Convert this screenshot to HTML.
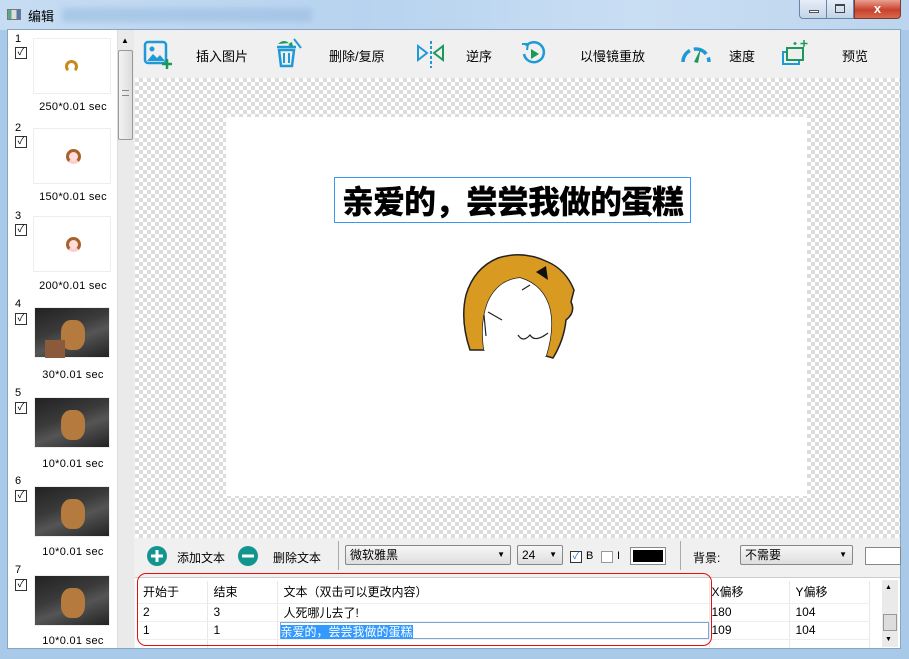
<!DOCTYPE html>
<html><head><meta charset="utf-8"><style>
*{box-sizing:border-box;margin:0;padding:0}
body{width:909px;height:659px;overflow:hidden;background:#a9c9e8;font-family:"Liberation Sans","Noto Sans CJK SC",sans-serif;font-size:12px;color:#000;position:relative}
.abs{position:absolute}
.title{left:0;top:0;width:909px;height:30px;background:linear-gradient(90deg,#c6dcf2,#b7d3ef 40%,#c9def3 70%,#bcd5ee)}
.checker{background-color:#fff;background-image:linear-gradient(45deg,#dcdcdc 25%,transparent 25%,transparent 75%,#dcdcdc 75%),linear-gradient(45deg,#dcdcdc 25%,transparent 25%,transparent 75%,#dcdcdc 75%);background-size:8px 8px;background-position:0 0,4px 4px}
.tb{font-size:13px}
.cb{width:12px;height:12px;border:1px solid #333;background:#fff;font-size:10px;line-height:10px;text-align:center}
.thumb{left:33px;width:78px;height:56px;background:#fff;border:1px solid #eee}
.dog{background:linear-gradient(160deg,#222 0,#3a3a3a 40%,#555 60%,#222);}
.lbl{left:30px;width:86px;text-align:center;font-size:11px;letter-spacing:.3px}
.dd{border:1px solid #888;background:linear-gradient(#f7f7f7,#dedede);border-radius:2px;height:20px;font-size:12px;line-height:18px;padding-left:4px}
.dd:after{content:"▼";position:absolute;right:5px;font-size:8px}
td{height:18px;padding-left:6px;border-right:1px solid #e8e8e8;border-bottom:1px solid #eee;font-size:12px}
</style></head><body>
<div class="abs title"></div>
<div class="abs" style="left:7px;top:9px;width:14px;height:11px;background:linear-gradient(90deg,#5a8 0,#5a8 30%,#ddd 30%,#ddd 70%,#57a 70%);border:1px solid #777"></div>
<div class="abs" style="left:28px;top:6px;font-size:13px">编辑</div>
<div class="abs" style="left:62px;top:8px;width:250px;height:14px;background:#9fc0e3;filter:blur(3px);opacity:.7"></div>
<div class="abs" style="left:799px;top:0;width:28px;height:19px;border:1px solid #6b84a3;border-top:none;border-radius:0 0 0 4px;background:linear-gradient(#e6eef8,#c3d4e8)"><div class="abs" style="left:9px;top:10px;width:10px;height:3px;border:1px solid #555;background:#fff"></div></div>
<div class="abs" style="left:827px;top:0;width:27px;height:19px;border:1px solid #6b84a3;border-top:none;border-left:none;background:linear-gradient(#e6eef8,#c3d4e8)"><div class="abs" style="left:8px;top:4px;width:10px;height:9px;border:1px solid #444;border-top-width:2px"></div></div>
<div class="abs" style="left:854px;top:0;width:47px;height:19px;border:1px solid #7a3a30;border-top:none;border-radius:0 0 4px 0;background:linear-gradient(#e9a192,#c8412b 55%,#d6694c);color:#fff;font-weight:bold;text-align:center;font-size:13px;line-height:17px">x</div>
<div class="abs" style="left:7px;top:29px;width:894px;height:620px;background:#f0f0f0;border:1px solid #8aa4c3"></div>
<div class="abs" style="left:8px;top:30px;width:109px;height:618px;background:#fff"></div>
<div class="abs" style="left:117px;top:30px;width:17px;height:618px;background:#eaeaea;border-left:1px solid #ddd"></div>
<div class="abs" style="left:121px;top:36px;font-size:8px">▲</div>
<div class="abs" style="left:118px;top:50px;width:15px;height:90px;background:linear-gradient(90deg,#f3f3f3,#dcdcdc);border:1px solid #999;border-radius:2px"></div>
<div class="abs" style="left:122px;top:90px;width:7px;height:6px;border-top:1px solid #888;border-bottom:1px solid #888"></div>

<div class="abs" style="left:15px;top:33px;font-size:11px">1</div><div class="abs cb" style="left:15px;top:47px">✓</div>
<div class="abs thumb" style="top:38px"><div class="abs" style="left:31px;top:21px;width:13px;height:13px;border:3px solid #c88a1c;border-bottom-color:#fff;border-radius:50%"></div></div>
<div class="abs lbl" style="top:101px">250*0.01 sec</div>
<div class="abs" style="left:15px;top:122px;font-size:11px">2</div><div class="abs cb" style="left:15px;top:136px">✓</div>
<div class="abs thumb" style="top:128px"><div class="abs" style="left:32px;top:20px;width:15px;height:15px;border:3px solid #a8612a;border-bottom-color:#fcc;border-radius:50%;background:#fdd"></div></div>
<div class="abs lbl" style="top:191px">150*0.01 sec</div>
<div class="abs" style="left:15px;top:210px;font-size:11px">3</div><div class="abs cb" style="left:15px;top:224px">✓</div>
<div class="abs thumb" style="top:216px"><div class="abs" style="left:32px;top:20px;width:15px;height:15px;border:3px solid #a8612a;border-bottom-color:#fcc;border-radius:50%;background:#fdd"></div></div>
<div class="abs lbl" style="top:280px">200*0.01 sec</div>
<div class="abs" style="left:15px;top:298px;font-size:11px">4</div><div class="abs cb" style="left:15px;top:313px">✓</div>
<div class="abs thumb dog" style="top:307px;left:34px;width:76px;height:51px"><div class="abs" style="left:26px;top:12px;width:24px;height:30px;background:#b57a3e;border-radius:40%"></div><div class="abs" style="left:10px;top:32px;width:20px;height:18px;background:#8a5a3a"></div></div>
<div class="abs lbl" style="top:369px">30*0.01 sec</div>
<div class="abs" style="left:15px;top:387px;font-size:11px">5</div><div class="abs cb" style="left:15px;top:402px">✓</div>
<div class="abs thumb dog" style="top:397px;left:34px;width:76px;height:51px"><div class="abs" style="left:26px;top:12px;width:24px;height:30px;background:#b57a3e;border-radius:40%"></div></div>
<div class="abs lbl" style="top:458px">10*0.01 sec</div>
<div class="abs" style="left:15px;top:475px;font-size:11px">6</div><div class="abs cb" style="left:15px;top:490px">✓</div>
<div class="abs thumb dog" style="top:486px;left:34px;width:76px;height:51px"><div class="abs" style="left:26px;top:12px;width:24px;height:30px;background:#b57a3e;border-radius:40%"></div></div>
<div class="abs lbl" style="top:546px">10*0.01 sec</div>
<div class="abs" style="left:15px;top:564px;font-size:11px">7</div><div class="abs cb" style="left:15px;top:579px">✓</div>
<div class="abs thumb dog" style="top:575px;left:34px;width:76px;height:51px"><div class="abs" style="left:26px;top:12px;width:24px;height:30px;background:#b57a3e;border-radius:40%"></div></div>
<div class="abs lbl" style="top:635px">10*0.01 sec</div>

<svg class="abs" style="left:143px;top:40px" width="30" height="30" viewBox="0 0 30 30"><rect x="2" y="2" width="21" height="21" rx="3" fill="none" stroke="#1f9ad6" stroke-width="2.5"/><circle cx="9" cy="9" r="2.5" fill="#1f9ad6"/><path d="M4 21l6-7 4 4 3-3 5 6z" fill="#1f9ad6"/><path d="M24 19v10M19 24h10" stroke="#1a9a5a" stroke-width="2.5"/></svg>
<div class="abs tb" style="left:196px;top:46px">插入图片</div>
<svg class="abs" style="left:274px;top:38px" width="30" height="30" viewBox="0 0 30 30"><path d="M3 9h19" stroke="#1f9ad6" stroke-width="2.5"/><path d="M5 12h15l-2 16H7z" fill="none" stroke="#1f9ad6" stroke-width="2.5"/><path d="M10 15v10M15 15v10" stroke="#1f9ad6" stroke-width="2"/><path d="M4 6q6-6 12 0l-2 1 5 2-1-5-2 1" fill="#1a9a5a"/><path d="M20 1l7 9" stroke="#1f9ad6" stroke-width="2"/></svg>
<div class="abs tb" style="left:329px;top:46px">删除/复原</div>
<svg class="abs" style="left:416px;top:40px" width="30" height="30" viewBox="0 0 30 30"><path d="M2 6l9 7-9 7z" fill="none" stroke="#1f9ad6" stroke-width="2"/><path d="M27 6l-9 7 9 7z" fill="none" stroke="#1a9a5a" stroke-width="2"/><path d="M15 1v27" stroke="#1f9ad6" stroke-width="2" stroke-dasharray="3 2"/></svg>
<div class="abs tb" style="left:466px;top:46px">逆序</div>
<svg class="abs" style="left:520px;top:40px" width="28" height="28" viewBox="0 0 28 28"><path d="M6 6A10 10 0 1 1 4 14" fill="none" stroke="#1f9ad6" stroke-width="2.5"/><path d="M2 4l6 0-1 6" fill="none" stroke="#1f9ad6" stroke-width="2"/><path d="M11 9l8 5-8 5z" fill="#1a9a5a"/></svg>
<div class="abs tb" style="left:580px;top:46px">以慢镜重放</div>
<svg class="abs" style="left:680px;top:42px" width="32" height="22" viewBox="0 0 32 22"><path d="M3 20A13 13 0 0 1 29 20" fill="none" stroke="#1f9ad6" stroke-width="3.5" stroke-dasharray="14 4"/><path d="M14 20l7-14-3 15z" fill="#1a9a5a"/></svg>
<div class="abs tb" style="left:729px;top:46px">速度</div>
<svg class="abs" style="left:780px;top:38px" width="28" height="30" viewBox="0 0 28 30"><rect x="3" y="14" width="16" height="12" fill="none" stroke="#1f9ad6" stroke-width="2"/><rect x="7" y="10" width="16" height="12" fill="#eee" stroke="#1a9a5a" stroke-width="2"/><path d="M24 2v7M20.5 5.5h7M15 4v3M13.5 5.5h3" stroke="#1a9a5a" stroke-width="1.5"/></svg>
<div class="abs tb" style="left:842px;top:46px">预览</div>

<div class="abs checker" style="left:135px;top:78px;width:765px;height:460px"></div>
<div class="abs" style="left:226px;top:117px;width:581px;height:379px;background:#fff"></div>
<div class="abs" style="left:334px;top:177px;width:357px;height:46px;border:1px solid #3a96f0;font-size:32px;font-weight:900;line-height:44px;text-align:center;font-family:'Noto Sans CJK SC',sans-serif;letter-spacing:-1px;white-space:nowrap;overflow:hidden">亲爱的，尝尝我做的蛋糕</div>
<svg class="abs" style="left:458px;top:250px" width="124" height="112" viewBox="0 0 124 112">
<path d="M12 100Q2 70 8 45Q16 18 40 8Q65 0 90 12Q108 20 116 40L113 52Q118 62 108 70Q106 90 95 108L88 106Q96 80 92 60Q86 35 62 28Q40 30 30 52Q22 72 26 100z" fill="#d99a22" stroke="#222" stroke-width="1.5"/>
<path d="M30 52Q22 72 26 100Q50 110 88 106Q96 80 92 60Q86 35 62 28Q40 30 30 52z" fill="#fff"/>
<path d="M78 22l10-6 2 14z" fill="#111"/>
<path d="M28 86L26 65M30 62l14 8M64 40l8-5M60 85q5 8 12 0q5 8 18-2" fill="none" stroke="#222" stroke-width="1.2"/></svg>

<svg class="abs" style="left:146px;top:545px" width="22" height="22"><circle cx="11" cy="11" r="10" fill="#12958f"/><path d="M11 5v12M5 11h12" stroke="#fff" stroke-width="3"/></svg>
<div class="abs" style="left:177px;top:549px">添加文本</div>
<svg class="abs" style="left:237px;top:545px" width="22" height="22"><circle cx="11" cy="11" r="10" fill="#12958f"/><path d="M5 11h12" stroke="#fff" stroke-width="3"/></svg>
<div class="abs" style="left:273px;top:549px">删除文本</div>
<div class="abs" style="left:338px;top:541px;width:1px;height:29px;background:#aaa"></div>
<div class="abs dd" style="left:345px;top:545px;width:166px">微软雅黑</div>
<div class="abs dd" style="left:517px;top:545px;width:46px">24</div>
<div class="abs cb" style="left:570px;top:551px;width:12px;height:12px;color:#2b6fd0">✓</div><div class="abs" style="left:586px;top:550px;font-size:11px">B</div>
<div class="abs cb" style="left:601px;top:551px;border-color:#999"></div><div class="abs" style="left:617px;top:550px;font-size:11px">I</div>
<div class="abs" style="left:630px;top:547px;width:36px;height:18px;border:1px solid #888;background:#fff;padding:2px"><div style="background:#000;width:100%;height:100%"></div></div>
<div class="abs" style="left:680px;top:541px;width:1px;height:29px;background:#aaa"></div>
<div class="abs" style="left:693px;top:549px">背景:</div>
<div class="abs dd" style="left:740px;top:545px;width:113px">不需要</div>
<div class="abs" style="left:865px;top:547px;width:36px;height:18px;border:1px solid #888;background:#fff"></div>

<div class="abs" style="left:135px;top:577px;width:765px;height:71px;background:#fff;border-top:1px solid #ccc;overflow:hidden">
<table class="abs" style="left:2px;top:3px;width:733px;border-collapse:collapse">
<tr style="border-bottom:1px solid #ddd"><td style="width:70px;height:22px">开始于</td><td style="width:70px">结束</td><td style="width:432px">文本（双击可以更改内容）</td><td style="width:80px;padding-left:2px">X偏移</td><td>Y偏移</td></tr>
<tr><td>2</td><td>3</td><td>人死哪儿去了!</td><td style="padding-left:2px">180</td><td>104</td></tr>
<tr><td>1</td><td>1</td><td style="padding:0 0 0 2px"><div style="border:1px solid #7aa7d8;height:17px"><span style="background:#3399ff;color:#fff">亲爱的，尝尝我做的蛋糕</span></div></td><td style="padding-left:2px">109</td><td>104</td></tr>
<tr><td style="height:10px"></td><td></td><td></td><td></td><td></td></tr>
</table>
</div>
<div class="abs" style="left:882px;top:580px;width:16px;height:67px;background:#eaeaea"></div>
<div class="abs" style="left:885px;top:584px;font-size:7px">▲</div>
<div class="abs" style="left:883px;top:614px;width:14px;height:17px;background:#ddd;border:1px solid #999"></div>
<div class="abs" style="left:885px;top:636px;font-size:7px">▼</div>
<div class="abs" style="left:137px;top:573px;width:575px;height:73px;border:1.5px solid #e01010;border-radius:9px"></div>
</body></html>
